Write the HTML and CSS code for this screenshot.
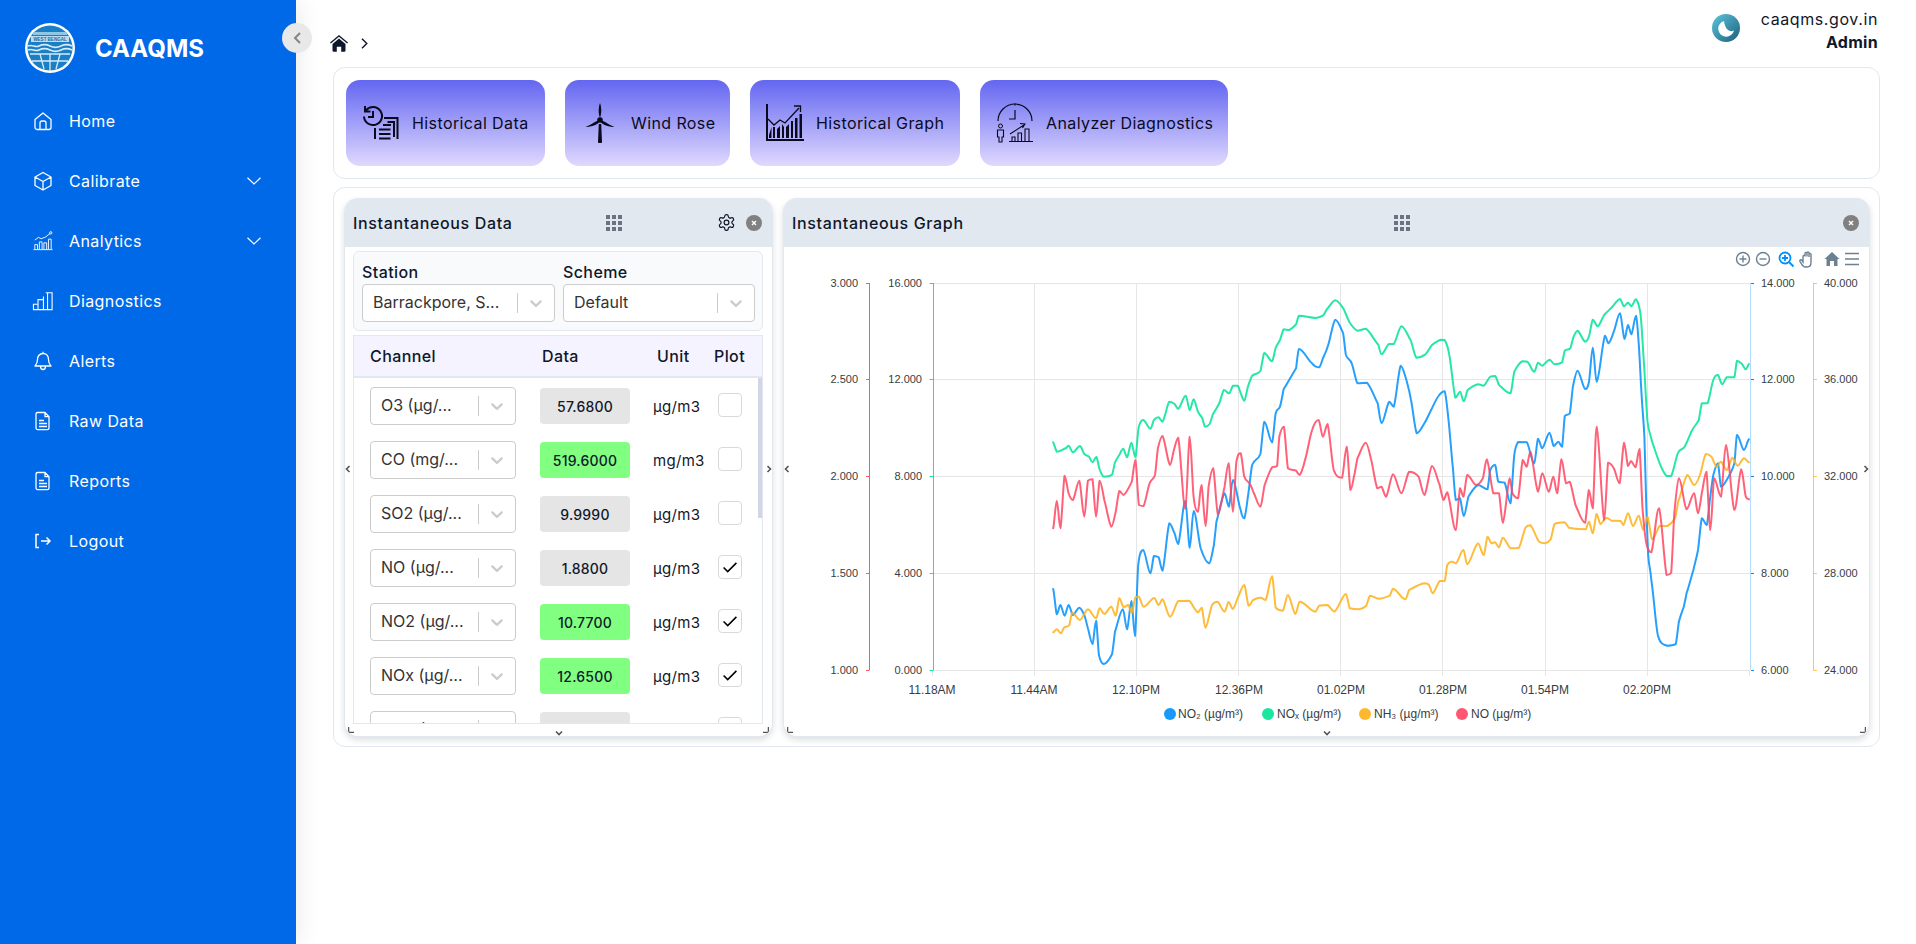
FILE: index.html
```html
<!DOCTYPE html>
<html lang="en">
<head>
<meta charset="utf-8">
<title>CAAQMS</title>
<link rel="stylesheet" href="styles.css">
</head>
<body>
<svg class="sprite" aria-hidden="true">
  <symbol id="rs-chev" viewBox="0 0 20 20"><path d="M4.516 7.548c0.436-0.446 1.043-0.481 1.576 0l3.908 3.747 3.908-3.747c0.533-0.481 1.141-0.446 1.574 0 0.436 0.445 0.408 1.197 0 1.615-0.406 0.418-4.695 4.502-4.695 4.502-0.217 0.223-0.502 0.335-0.787 0.335s-0.57-0.112-0.789-0.335c0 0-4.287-4.084-4.695-4.502s-0.436-1.17 0-1.615z"/></symbol>
  <symbol id="grid9" viewBox="0 0 16 16"><path d="M0 0h4v4H0zM6 0h4v4H6zM12 0h4v4h-4zM0 6h4v4H0zM6 6h4v4H6zM12 6h4v4h-4zM0 12h4v4H0zM6 12h4v4H6zM12 12h4v4h-4z"/></symbol>
  <symbol id="close" viewBox="0 0 16 16"><circle cx="8" cy="8" r="8" fill="#808080"/><path d="M6 6l4 4M10 6l-4 4" stroke="#fff" stroke-width="1.4" fill="none"/></symbol>
  <symbol id="doc" viewBox="0 0 20 20"><path d="M4.5 1.5h7.5l4 4.2V17a1.6 1.6 0 0 1-1.6 1.6H4.6A1.6 1.6 0 0 1 3 17V3a1.6 1.6 0 0 1 1.5-1.5zM12 1.500v4.200h4M6 9.500h5M6 12.500h8M6 15.500h8" fill="none" stroke="#fff" stroke-width="1.3" stroke-linejoin="round"/></symbol>
  <symbol id="nav-down" viewBox="0 0 14 8"><path d="M.5.700 7 7 13.500.700" fill="none" stroke="#fff" stroke-width="1.200"/></symbol>
  <symbol id="check" viewBox="0 0 24 24"><path d="M5 12.500l4.500 4.500L19 7.500" fill="none" stroke="#000" stroke-width="1.700"/></symbol>
  <symbol id="mini-l" viewBox="0 0 6 8"><path d="M4.500 1 1.500 4l3 3" fill="none" stroke="#555" stroke-width="1.600"/></symbol>
  <symbol id="mini-r" viewBox="0 0 6 8"><path d="M1.500 1l3 3-3 3" fill="none" stroke="#555" stroke-width="1.600"/></symbol>
  <symbol id="mini-d" viewBox="0 0 8 6"><path d="M1 1.500l3 3 3-3" fill="none" stroke="#555" stroke-width="1.600"/></symbol>
  <symbol id="corner-l" viewBox="0 0 6 6"><path d="M.500 0v5.500H6" fill="none" stroke="#555" stroke-width="1.500"/></symbol>
  <symbol id="corner-r" viewBox="0 0 6 6"><path d="M5.500 0v5.500H0" fill="none" stroke="#555" stroke-width="1.500"/></symbol>
</svg>

<div class="app">
  <aside class="sidebar">
    <div class="brand">
      <svg class="brand-logo" viewBox="0 0 50 50" aria-hidden="true">
        <circle cx="25" cy="25" r="25" fill="#fff"/>
        <circle cx="25" cy="25" r="22.500" fill="#1a7fc4"/>
        <path d="M8 9h34v3H8z" fill="#8fc7e6"/>
        <rect x="6" y="13" width="38" height="6" fill="#bcdcf0"/>
        <text x="25" y="18" class="logo-text" text-anchor="middle">WEST BENGAL</text>
        <path d="M3 23c4-2 7 2 11 0s7-2 11 0 7 2 11 0 7-2 11 0M3 27c4-2 7 2 11 0s7-2 11 0 7 2 11 0 7-2 11 0M5 31h40" fill="none" stroke="#d7ecf8" stroke-width="1.500"/>
        <path d="M25 31v17M15 31l4 15M35 31l-4 15M7 38h36" fill="none" stroke="#d7ecf8" stroke-width="1.300"/>
      </svg>
      <span class="brand-name">CAAQMS</span>
    </div>
    <button class="collapse" type="button" aria-label="Collapse">
      <svg viewBox="0 0 10 14" width="10" height="14"><path d="M8 2 3 7l5 5" fill="none" stroke="#858585" stroke-width="2"/></svg>
    </button>
    <nav class="menu">
      <a class="menu-item"><svg class="menu-icon" viewBox="0 0 20 20"><path d="M2 8.500 10 2l8 6.500V16.500A2 2 0 0 1 16 18.500H4a2 2 0 0 1-2-2zM7 18.500V12a2 2 0 0 1 2-2h2a2 2 0 0 1 2 2v6.500" fill="none" stroke="#fff" stroke-width="1.300" stroke-linejoin="round"/></svg><span>Home</span></a>
      <a class="menu-item"><svg class="menu-icon" viewBox="0 0 20 20"><path d="M10 1.500 18 6v8.500l-8 4.500-8-4.500V6zM2 6l8 4.500L18 6M10 10.500V19" fill="none" stroke="#fff" stroke-width="1.300" stroke-linejoin="round"/></svg><span>Calibrate</span><svg class="menu-caret"><use href="#nav-down"/></svg></a>
      <a class="menu-item"><svg class="menu-icon menu-icon--wide" viewBox="0 0 22 22"><path d="M.500 20.500h21M2 20v-5h3v5M7 20v-8h3v8M12 20v-7h3v7M17 20V9h3v11M2 10l4-3 3 1.500 5-2 5-4" fill="none" stroke="#fff" stroke-width="1"/><circle cx="19.500" cy="2" r="1.300" fill="none" stroke="#fff"/></svg><span>Analytics</span><svg class="menu-caret"><use href="#nav-down"/></svg></a>
      <a class="menu-item"><svg class="menu-icon menu-icon--wide" viewBox="0 0 22 22"><path d="M.500 14.500h5v6h-5zM5.500 9.500h6v11h-6zM11.500 6V20.500h2M14 2h7v18.500h-9.500M16 2v18.500" fill="none" stroke="#fff" stroke-width="1.200"/></svg><span>Diagnostics</span></a>
      <a class="menu-item"><svg class="menu-icon" viewBox="0 0 20 20"><path d="M10 2.500c-3.500 0-5.500 2.700-5.500 6 0 3.500-1 5-2.500 6.500h16c-1.500-1.500-2.500-3-2.500-6.500 0-3.300-2-6-5.500-6zM10 .800v1.700M7.500 15.500c0 2 1 3 2.500 3s2.500-1 2.500-3" fill="none" stroke="#fff" stroke-width="1.300" stroke-linejoin="round"/></svg><span>Alerts</span></a>
      <a class="menu-item"><svg class="menu-icon"><use href="#doc"/></svg><span>Raw Data</span></a>
      <a class="menu-item"><svg class="menu-icon"><use href="#doc"/></svg><span>Reports</span></a>
      <a class="menu-item"><svg class="menu-icon" viewBox="0 0 20 20"><path d="M6 3.500H3v13h3M8 10h9M13.500 6.500 17 10l-3.500 3.500" fill="none" stroke="#fff" stroke-width="1.500"/></svg><span>Logout</span></a>
    </nav>
  </aside>

  <main class="main">
    <header class="topbar">
      <div class="crumbs">
        <svg class="crumb-home" viewBox="0 0 18 17"><path d="M9 0 0 7.500l.900 1L9 1.800l8.100 6.700.900-1z" fill="#0f172a"/><path d="M2.500 9 9 3.500 15.500 9v6.500a1.300 1.300 0 0 1-1.300 1.300h-3v-5H6.800v5h-3a1.300 1.300 0 0 1-1.300-1.300z" fill="#0f172a"/></svg>
        <svg class="crumb-sep" viewBox="0 0 7 11"><path d="M1 .700 5.800 5.500 1 10.300" fill="none" stroke="#0f172a" stroke-width="1.400"/></svg>
      </div>
      <div class="user">
        <svg class="user-icon" viewBox="0 0 28 28"><defs><linearGradient id="ug" x1="0" y1="0" x2="1" y2="1"><stop offset="0" stop-color="#5cc6dc"/><stop offset="1" stop-color="#1d5f7d"/></linearGradient></defs><circle cx="14" cy="14" r="14" fill="url(#ug)"/><path d="M12 7a8 8 0 1 0 10 9.500c-4 2-9-.500-10-9.500z" fill="#fff"/></svg>
        <div class="user-text"><span class="user-site">caaqms.gov.in</span><strong class="user-role">Admin</strong></div>
      </div>
    </header>

    <section class="card card--actions">
      <a class="action action--hist">
        <svg class="action-icon" viewBox="0 0 40 40"><path d="M5 7.400A9 9 0 1 1 3 13.500M4 3v5.500h5.500M12 8v6H7" fill="none" stroke="#0a0a1e" stroke-width="2"/><path d="M23 15h13.500v21M26.500 19h6.500v15M14 25v11M18 26.500h11.500M18 31h11.500M18 35.500h11.500M22 22h8" fill="none" stroke="#0a0a1e" stroke-width="2"/></svg>
        <span>Historical Data</span>
      </a>
      <a class="action action--wind">
        <svg class="action-icon" viewBox="0 0 40 40"><path d="M20 15C18 10 18.500 4 20 0c1.500 4 2 10 0 15zM18 17.500C13 20 9 22.500 5.500 24c4 0 9.500-1 13.500-4.500zM22 17.500c5 2.500 9 5 12.500 6.500-4 0-9.500-1-13.500-4.500z" fill="#0a0a1e"/><circle cx="20" cy="17" r="2.800" fill="#0a0a1e"/><path d="M18.800 21h2.400l.800 17.500a2 2 0 0 1-4 0z" fill="#0a0a1e"/></svg>
        <span>Wind Rose</span>
      </a>
      <a class="action action--graph">
        <svg class="action-icon" viewBox="0 0 40 40"><path d="M2 1v36h37" fill="none" stroke="#0a0a1e" stroke-width="2"/><path d="M4 32l2.500-8v11H4zM8 24h2v11H8zM12 26l3-3v12h-3zM17 21l2 3v11h-2zM21 24l3-3v14h-3zM26 18h2v17h-2zM30 15h2.500v20H30zM34.500 11H37v24h-2.500z" fill="#0a0a1e"/><path d="M3 16l6 6 6-5 5 3L34 5" fill="none" stroke="#0a0a1e" stroke-width="1.300"/><path d="M29 3h6.500v6" fill="none" stroke="#0a0a1e" stroke-width="1.300"/></svg>
        <span>Historical Graph</span>
      </a>
      <a class="action action--diag">
        <svg class="action-icon" viewBox="0 0 40 40"><path d="M3 18a17 17 0 0 1 34 0" fill="none" stroke="#0a0a1e" stroke-width="1.200"/><path d="M20 7v9h-6M20 .500v2" fill="none" stroke="#0a0a1e" stroke-width="1.200"/><circle cx="5.500" cy="23" r="2" fill="none" stroke="#0a0a1e"/><path d="M2.500 27h6v7H7v5H4v-5H2.500z" fill="none" stroke="#0a0a1e" stroke-width="1.100"/><path d="M15 31l14-9M25 20.500l5 .500-2.500 4M14 38.500h24M17 38v-4h3v4M23 38v-8h3.500v8M30 38V26h4v12" fill="none" stroke="#0a0a1e" stroke-width="1.100"/></svg>
        <span>Analyzer Diagnostics</span>
      </a>
    </section>

    <section class="card card--panels">
      <article class="panel panel--data">
        <div class="panel-head panel-head--data">
          <h2 class="panel-title">Instantaneous Data</h2>
          <svg class="grip"><use href="#grid9"/></svg>
          <div class="panel-tools">
            <svg class="gear" viewBox="0 0 24 24"><path d="M12.220 2h-.44a2 2 0 0 0-2 2v.180a2 2 0 0 1-1 1.730l-.430.250a2 2 0 0 1-2 0l-.150-.080a2 2 0 0 0-2.730.730l-.220.380a2 2 0 0 0 .730 2.730l.150.100a2 2 0 0 1 1 1.720v.510a2 2 0 0 1-1 1.740l-.150.090a2 2 0 0 0-.730 2.730l.220.380a2 2 0 0 0 2.730.730l.150-.080a2 2 0 0 1 2 0l.430.250a2 2 0 0 1 1 1.730V20a2 2 0 0 0 2 2h.440a2 2 0 0 0 2-2v-.180a2 2 0 0 1 1-1.730l.430-.250a2 2 0 0 1 2 0l.150.080a2 2 0 0 0 2.730-.730l.220-.390a2 2 0 0 0-.730-2.730l-.150-.080a2 2 0 0 1-1-1.740v-.500a2 2 0 0 1 1-1.740l.150-.090a2 2 0 0 0 .730-2.730l-.220-.380a2 2 0 0 0-2.730-.730l-.150.080a2 2 0 0 1-2 0l-.430-.250a2 2 0 0 1-1-1.730V4a2 2 0 0 0-2-2z" fill="none" stroke="#0f172a" stroke-width="1.500"/><circle cx="12" cy="12" r="3" fill="none" stroke="#0f172a" stroke-width="1.500"/></svg>
            <svg class="close"><use href="#close"/></svg>
          </div>
        </div>
        <div class="panel-body">
          <div class="filters">
            <div class="filter">
              <label class="filter-label">Station</label>
              <div class="select"><span class="select-value">Barrackpore, S...</span><i class="select-sep"></i><svg class="select-chev"><use href="#rs-chev"/></svg></div>
            </div>
            <div class="filter">
              <label class="filter-label">Scheme</label>
              <div class="select"><span class="select-value">Default</span><i class="select-sep"></i><svg class="select-chev"><use href="#rs-chev"/></svg></div>
            </div>
          </div>
          <div class="table">
            <div class="table-head"><span>Channel</span><span>Data</span><span>Unit</span><span>Plot</span></div>
            <div class="table-body">
              <div class="row"><div class="select select--row"><span class="select-value">O3 (µg/...</span><i class="select-sep"></i><svg class="select-chev"><use href="#rs-chev"/></svg></div><div class="value">57.6800</div><div class="unit">µg/m3</div><div class="tick"></div></div>
              <div class="row"><div class="select select--row"><span class="select-value">CO (mg/...</span><i class="select-sep"></i><svg class="select-chev"><use href="#rs-chev"/></svg></div><div class="value value--ok">519.6000</div><div class="unit">mg/m3</div><div class="tick"></div></div>
              <div class="row"><div class="select select--row"><span class="select-value">SO2 (µg/...</span><i class="select-sep"></i><svg class="select-chev"><use href="#rs-chev"/></svg></div><div class="value">9.9990</div><div class="unit">µg/m3</div><div class="tick"></div></div>
              <div class="row"><div class="select select--row"><span class="select-value">NO (µg/...</span><i class="select-sep"></i><svg class="select-chev"><use href="#rs-chev"/></svg></div><div class="value">1.8800</div><div class="unit">µg/m3</div><div class="tick"><svg><use href="#check"/></svg></div></div>
              <div class="row"><div class="select select--row"><span class="select-value">NO2 (µg/...</span><i class="select-sep"></i><svg class="select-chev"><use href="#rs-chev"/></svg></div><div class="value value--ok">10.7700</div><div class="unit">µg/m3</div><div class="tick"><svg><use href="#check"/></svg></div></div>
              <div class="row"><div class="select select--row"><span class="select-value">NOx (µg/...</span><i class="select-sep"></i><svg class="select-chev"><use href="#rs-chev"/></svg></div><div class="value value--ok">12.6500</div><div class="unit">µg/m3</div><div class="tick"><svg><use href="#check"/></svg></div></div>
              <div class="row"><div class="select select--row"><span class="select-value">NH3 (µg/...</span><i class="select-sep"></i><svg class="select-chev"><use href="#rs-chev"/></svg></div><div class="value">30.7000</div><div class="unit">µg/m3</div><div class="tick"><svg><use href="#check"/></svg></div></div>
              <span class="scrollbar"></span>
            </div>
          </div>
        </div>
        <svg class="mark mark--l"><use href="#mini-l"/></svg>
        <svg class="mark mark--r"><use href="#mini-r"/></svg>
        <svg class="mark-d"><use href="#mini-d"/></svg>
        <svg class="corner corner--l"><use href="#corner-l"/></svg>
        <svg class="corner corner--r"><use href="#corner-r"/></svg>
      </article>

      <article class="panel panel--graph">
        <div class="panel-head panel-head--graph">
          <h2 class="panel-title">Instantaneous Graph</h2>
          <svg class="grip"><use href="#grid9"/></svg>
          <div class="panel-tools"><svg class="close"><use href="#close"/></svg></div>
        </div>
        <svg class="chart" viewBox="783 247 1087 490" width="1087" height="490">
          <g class="grid">
            <path d="M933 283.500H1750M933 379.500H1750M933 476.500H1750M933 573.500H1750M933 670.500H1750"/>
            <path d="M1034.500 283V676M1136.500 283V676M1238.500 283V676M1340.500 283V676M1442.500 283V676M1545.500 283V676M1647.500 283V676M932.500 670V676M1749.500 670V676"/>
          </g>
          <path class="ax ax-red" d="M869.500 283V670M866 283.500h3.500M866 379.500h3.500M866 476.500h3.500M866 573.500h3.500M866 670.500h3.500"/>
          <path class="ax ax-green" d="M933.500 283V670M929.500 283.500h4M929.500 379.500h4M929.500 476.500h4M929.500 573.500h4M929.500 670.500h4"/>
          <path class="ax ax-blue" d="M1750.500 283V670"/>
          <path class="ax-blue-ticks" d="M1751 283.500h3M1751 379.500h3M1751 476.500h3M1751 573.500h3M1751 670.500h3"/>
          <path class="ax ax-orange" d="M1813.500 283V670M1813 283.500h4M1813 379.500h4M1813 476.500h4M1813 573.500h4M1813 670.500h4"/>

          <g class="lbl lbl-end">
            <text x="858" y="287">3.000</text><text x="858" y="383">2.500</text><text x="858" y="480">2.000</text><text x="858" y="577">1.500</text><text x="858" y="674">1.000</text>
            <text x="922" y="287">16.000</text><text x="922" y="383">12.000</text><text x="922" y="480">8.000</text><text x="922" y="577">4.000</text><text x="922" y="674">0.000</text>
          </g>
          <g class="lbl">
            <text x="1761" y="287">14.000</text><text x="1761" y="383">12.000</text><text x="1761" y="480">10.000</text><text x="1761" y="577">8.000</text><text x="1761" y="674">6.000</text>
            <text x="1824" y="287">40.000</text><text x="1824" y="383">36.000</text><text x="1824" y="480">32.000</text><text x="1824" y="577">28.000</text><text x="1824" y="674">24.000</text>
          </g>
          <g class="lbl lbl-x">
            <text x="932" y="694">11.18AM</text><text x="1034" y="694">11.44AM</text><text x="1136" y="694">12.10PM</text><text x="1239" y="694">12.36PM</text><text x="1341" y="694">01.02PM</text><text x="1443" y="694">01.28PM</text><text x="1545" y="694">01.54PM</text><text x="1647" y="694">02.20PM</text>
          </g>

          <polyline class="s s-blue" points="1053.2,589 1056.8,614.3 1060.4,605 1064.6,615.7 1068.6,605 1072.9,615 1079.3,607.7 1084.3,615 1087.9,628.3 1092.5,644 1096.1,620.7 1098.9,655 1103.9,664 1112.1,654 1115,631.7 1122.9,609.3 1127.1,629.3 1131.4,601 1135,636 1138.2,565 1143.2,550 1150.4,573.3 1153.9,556 1158.6,557.3 1162.5,570.7 1169.3,523.3 1174.6,533.3 1178.2,544 1185.4,501 1189.7,547.7 1193.6,511 1200.7,548.3 1209.3,563.3 1213.9,545 1216.4,521.7 1224.6,493.3 1228.9,506.7 1232.9,480 1240.7,510 1244.3,518.3 1247.9,496.7 1252.1,465 1260.4,454 1264.3,421.7 1272.1,442.3 1275.7,413.3 1280,406.7 1283.6,389.3 1296.1,368.3 1298.9,349 1312.1,363.3 1319.3,367.3 1322.9,358.3 1328.2,345 1335.2,319.7 1343.2,333.3 1345.9,355 1351.7,363.3 1357.4,383.3 1367,382.7 1377.7,403.3 1381.5,423.3 1389.2,401.7 1393.8,406.7 1400.7,365.7 1406.4,380 1411,400 1416.7,433.3 1424.4,423.3 1432,408.3 1438.5,396 1444.7,391.3 1448.5,420 1453.1,470 1455.8,500 1460,498.3 1463.8,516 1468.4,496.7 1478,485 1487.5,489.3 1490.2,470 1495.2,465 1498.2,481.7 1504.7,482.7 1510.5,503.3 1514.3,455 1518.1,442 1526.9,442.3 1534.2,463.3 1538,438.7 1542.2,448.3 1549.5,432.7 1553.7,446 1558.3,441.7 1562.1,446.7 1564.8,416 1569.8,413.3 1572.9,386.7 1577.5,370.7 1585.1,389 1588.9,382.3 1592.8,347.7 1596.6,381.7 1605,335.7 1608.5,343.3 1613.8,331.7 1620,313.3 1624.5,339 1628,325 1631.4,334.3 1636,315.7 1638.7,343.3 1641.7,396.7 1644.4,436.7 1646.3,506.7 1648.3,556.7 1651.3,580 1657.8,635 1666.6,645.7 1675.8,644 1678.9,621.7 1683.8,606.7 1686.5,593.3 1693.4,570 1698,550 1701.8,518.3 1706.8,525 1710.3,496.7 1713.3,475 1717.9,463.3 1721,486.7 1728.6,476.7 1734.4,463.3 1737,435 1743.9,450 1748.9,439.3"/>
          <polyline class="s s-green" points="1053.2,442.3 1056.8,451.7 1065.7,448.3 1068.6,445.7 1072.9,452.3 1080,446 1084.3,454 1089,456.7 1092.5,462.3 1096.4,457 1099.6,469.3 1103.6,476.7 1112.1,474.7 1115,462.3 1119.3,455 1123.2,448.7 1127.1,457.3 1131.4,442.7 1135.4,457.3 1138.6,427.7 1143.2,420 1150.4,428.7 1153.9,420 1158.6,417.3 1162.5,421.7 1169.3,401.7 1174.6,404 1178.2,409 1185.7,395.7 1189.7,410 1193.6,399.3 1197.9,411.7 1202.1,417.7 1205,426.7 1209.6,424 1212.9,414.3 1219.3,403.3 1223.9,390 1229.3,393.3 1232.9,385.7 1237.9,385.7 1240.7,393.3 1244.3,400.7 1247.9,386.7 1252.1,375.7 1260.4,371 1264.3,353 1272.1,361.3 1275.7,347.7 1280,340 1283.6,329.3 1288.9,330 1296.1,324.3 1298.9,315.7 1315.7,318 1322.9,315.7 1326.8,309.3 1335.2,300.3 1343.2,308.3 1349.8,322.7 1357.4,330.7 1365.8,328.7 1378.5,345 1381.5,354.3 1388.8,344 1393.8,344 1401.4,326.3 1411,341 1416.3,357.7 1425.5,354.3 1432,345 1440.8,339.7 1444.7,340 1449.3,355 1455.4,397.7 1460,391.7 1463.8,401.3 1467.6,390 1478,384.3 1483.7,385.7 1490.2,376.7 1495.2,376 1499,385 1510.5,393.3 1514.3,371.7 1522,361.3 1527.7,362 1534.2,371.7 1538,362.7 1542.2,365.7 1549.5,359.7 1554.5,364.3 1562.1,362.3 1564.8,350.7 1570.2,348.3 1573.6,336.7 1577.5,330.7 1585.1,341.7 1588.9,336.7 1592.8,319.7 1597.7,326.3 1604.2,315 1611.9,307.3 1620,299 1623.8,306.3 1628,302.7 1631.4,306.3 1636,299.3 1640.6,315 1644.4,370 1647.5,421.7 1652.1,441.7 1659.7,463.3 1666.6,476 1671.2,476 1678.1,452.7 1684.6,446.7 1692.3,430 1698.8,420 1701.8,403.3 1707.6,403.3 1713.3,380 1717.9,375 1722.1,384.3 1726.7,377.3 1734.4,377.3 1737,360.7 1742,364 1745.8,369.3 1748.9,364"/>
          <polyline class="s s-orange" points="1053.2,632.3 1056.8,629.3 1061.1,633.3 1063.9,627.7 1069.3,625 1072.1,612.7 1080,620 1087.9,609.3 1096.1,618.3 1099.6,608.3 1104.3,614 1111.4,606.7 1115.7,615.7 1119.3,598.3 1123.6,607.3 1128.2,605 1131.8,612.7 1135.4,597.3 1138.9,596.7 1143.6,606.7 1154.3,598 1158.6,605 1162.5,599.3 1170,616.7 1178.2,601 1189,600.7 1197.9,612.3 1201.8,607.7 1205.4,627.7 1212.1,605 1217.5,601.7 1224.6,611.7 1228.6,602 1232.9,609 1238.2,596.7 1244.3,585 1248.6,605.7 1253.2,600 1260.4,597.7 1265.7,600 1272.1,576.3 1275.7,607.7 1282.9,610.7 1287.9,595 1295.4,614 1299.6,601.7 1315.3,611.7 1319.1,605.7 1327.6,605 1334.4,611.7 1345.9,594 1349.8,608.3 1359.3,609.3 1366.2,605.7 1370,595.7 1378.5,598.7 1389.9,595.7 1393,588.7 1405.2,599.3 1409.1,590 1424.4,583.3 1429,585 1432.8,593.3 1439.7,581 1444.7,581 1447.3,565 1451.9,561.7 1456.1,563.3 1463.4,550 1467.2,564.3 1478,543.3 1483.7,555 1487.5,536.7 1491.4,543.3 1495.2,542.3 1499,547.3 1502.8,537.7 1510.5,548.3 1518.9,547.7 1525.8,527.3 1530.4,525.3 1539.2,541.7 1544.9,543.3 1550.7,539.3 1554.5,524 1564.8,522.3 1569,527.7 1585.9,529.3 1588.9,521.7 1592.8,533.3 1596.6,514 1600.4,524 1606.2,517.7 1611.9,520.7 1620.7,521 1623.4,525 1628,513.3 1633,526 1638.7,515.7 1643.3,530 1647.5,516.7 1652.1,539.3 1659.7,526 1667.4,526 1675,518.3 1678.1,501.7 1687.3,475 1694.2,485 1699.9,475 1705.7,454 1711.4,456.7 1716.4,466.7 1721,461.7 1726.7,470 1732.5,457.7 1737.4,465.7 1743.9,458.3 1748.9,462.3"/>
          <polyline class="s s-red" points="1053.2,528.3 1056.8,500.7 1060.4,528.3 1064.6,475.7 1068.6,493.3 1072.9,500 1079.3,480.7 1084.3,516.7 1087.9,480.7 1092.5,479.3 1096.1,516.7 1099.6,480.7 1104.3,500 1111.4,526.7 1115.7,511.7 1119.3,491 1123.6,495 1131.8,481.7 1135.4,460 1138.9,505 1143.6,506 1149.6,483.3 1155,475 1157.9,448.3 1162.5,436 1170,465 1173.9,450 1178.2,437.7 1185.4,509 1189.7,436.7 1193.6,496.7 1197.9,511.7 1201.4,485 1205.7,526 1208.6,486.7 1213.2,468.3 1217.9,514.3 1224.6,486.7 1228.6,463.3 1232.9,511.7 1236.4,461.7 1240.7,453.3 1244.3,476.7 1249.6,483.3 1253.2,491.7 1260.4,506.7 1264.6,485 1272.1,467.3 1277.1,466 1279.3,436.7 1283.9,426.7 1287.9,468.3 1296.1,470.7 1299.6,475 1305,460 1312.1,430 1318.6,420 1322.9,436.7 1327.5,424 1333.7,470 1342.1,477.7 1346.7,446.7 1350.5,490 1354.7,473.3 1357.4,458.3 1365.8,442.7 1370.8,458.3 1377.3,488.3 1381.5,486.7 1386.1,496.7 1393,474.3 1401.4,493.3 1409.1,471.7 1418.6,476.7 1424.4,495 1432,466 1439.7,485 1443.5,500 1447.3,492.3 1455.8,530 1460,488.3 1463.4,496.7 1467.2,475 1476,485 1482.9,478.3 1486.8,459.3 1493.3,493.3 1499,493.3 1502.8,522.7 1509.7,478.3 1512.4,493.3 1518.1,498.3 1522.7,460 1526.6,466.7 1530.4,451.7 1538,491.7 1542.2,473.3 1548.8,491.7 1553.3,476.7 1557.2,493.3 1561.4,459.3 1566,483.3 1569.8,481.7 1575.5,505 1585.1,522.7 1588.9,490 1592.8,508.3 1596.6,426.7 1604.2,520 1608.1,462.7 1613.8,468.3 1619.6,483.3 1624.1,442.7 1628,466 1631,461 1635.6,467.3 1639.5,449 1642.5,508.3 1646.3,543.3 1651.3,552.3 1659,508.3 1666.6,575 1671.2,572.7 1674.3,513.3 1678.9,478.3 1686.5,509.3 1694.2,493.3 1698,513.3 1701.8,493.3 1706.4,471.7 1710.3,530 1714.1,478.3 1721,496.7 1725.9,445 1734.4,510 1741.3,469.3 1745.8,496.7 1748.9,499.3"/>

          <g class="legend">
            <circle cx="1170" cy="714" r="6" fill="#008ffb"/><text x="1178" y="718">NO₂ (µg/m³)</text>
            <circle cx="1268" cy="714" r="6" fill="#00e396"/><text x="1277" y="718">NOₓ (µg/m³)</text>
            <circle cx="1365" cy="714" r="6" fill="#feb019"/><text x="1374" y="718">NH₃ (µg/m³)</text>
            <circle cx="1462" cy="714" r="6" fill="#ff4560"/><text x="1471" y="718">NO (µg/m³)</text>
          </g>

          <g class="toolbar">
            <circle cx="1743" cy="259" r="6.500"/><path d="M1743 255.500v7M1739.500 259h7"/>
            <circle cx="1763" cy="259" r="6.500"/><path d="M1759.500 259h7"/>
            <g class="tool-on"><circle cx="1785" cy="258" r="5.500"/><path d="M1789 262l4.500 4.500" stroke-width="2.500"/><path d="M1785 255v6M1782 258h6" stroke-width="1.200"/></g>
            <path d="M1803 259v-2.500c0-1.500 2-1.500 2 0v-3c0-1.500 2-1.500 2 0v3-3.500c0-1.500 2-1.500 2 0v4-2.500c0-1.500 2-1.500 2 0v8c0 3-1.500 4.500-4 4.500h-2c-2 0-3-2-5-5.500-.800-1.500 1-2.500 2-1l1 1.500z" stroke-width="1.100"/>
            <path class="tool-fill" d="M1832 252l7.500 7h-2v7h-3.500v-5h-4v5h-3.500v-7h-2z"/>
            <path d="M1845 253.500h14M1845 259h14M1845 264.500h14" stroke-width="2"/>
          </g>
        </svg>
        <svg class="mark mark--l"><use href="#mini-l"/></svg>
        <svg class="mark mark--r"><use href="#mini-r"/></svg>
        <svg class="mark-d"><use href="#mini-d"/></svg>
        <svg class="corner corner--l"><use href="#corner-l"/></svg>
        <svg class="corner corner--r"><use href="#corner-r"/></svg>
      </article>
    </section>
  </main>
</div>
<script src="chart.js"></script>
</body>
</html>
```
FILE: styles.css
```css
* { box-sizing: border-box; }
html, body { margin: 0; height: 100%; }
body {
  font-family: Inter, "Noto Sans", "Liberation Sans", sans-serif;
  color: #0f172a;
  background: #fff;
  overflow: hidden;
}
.sprite { width: 0; height: 0; position: absolute; }
.app { display: flex; height: 944px; }

/* sidebar */
.sidebar {
  position: relative;
  flex: 0 0 296px;
  background: #0069e8;
  color: #fff;
  box-shadow: 0 0 24px rgba(0, 0, 0, .1);
  z-index: 2;
}
.brand { display: flex; align-items: center; gap: 20px; height: 91px; padding: 5px 0 0 25px; }
.brand-logo { width: 50px; height: 50px; flex: none; }
.logo-text { font: 700 4.500px "Liberation Sans", sans-serif; fill: #1a6ba5; }
.brand-name { font-size: 24px; font-weight: 700; }
.collapse {
  position: absolute; left: 282px; top: 23px;
  width: 30px; height: 30px; padding: 0;
  display: flex; align-items: center; justify-content: center;
  border: 0; border-radius: 50%; background: #e8e8e8;
}
.menu { display: flex; flex-direction: column; }
.menu-item { display: flex; align-items: center; height: 60px; padding: 0 35px 0 33px; font-size: 16px; letter-spacing: .4px; }
.menu-icon { width: 20px; height: 20px; margin-right: 16px; flex: none; }
.menu-icon--wide { overflow: visible; }
.menu-caret { width: 14px; height: 8px; margin-left: auto; }

/* main */
.main { flex: 1; min-width: 0; padding: 0 36px 0 37px; display: flex; flex-direction: column; }
.topbar { display: flex; justify-content: space-between; height: 67px; }
.crumbs { display: flex; align-items: center; gap: 13px; margin: 35px 0 0 -3px; height: 17px; }
.crumb-home { width: 18px; height: 17px; }
.crumb-sep { width: 7px; height: 11px; }
.user { display: flex; gap: 21px; padding-top: 8px; height: 60px; margin-right: 2px; }
.user-icon { width: 28px; height: 28px; margin-top: 6px; }
.user-text { display: flex; flex-direction: column; align-items: flex-end; line-height: 23px; font-size: 16px; letter-spacing: .6px; }
.user-role { font-size: 16px; font-weight: 700; letter-spacing: .3px; }

.card { border: 1px solid #e2e8f0; border-radius: 12px; background: #fff; }
.card--actions { display: flex; gap: 20px; height: 112px; padding: 12px; }
.action {
  display: flex; align-items: center; gap: 11px; height: 86px; padding-left: 15px;
  border-radius: 14px;
  background: linear-gradient(180deg, #6366f1 0%, #e0d9fe 100%);
  font-size: 16px; font-weight: 400; letter-spacing: .4px; color: #0a0a1e; white-space: nowrap;
}
.action-icon { width: 40px; height: 40px; flex: none; }
.action--hist { width: 199px; }
.action--wind { width: 165px; }
.action--graph { width: 210px; }
.action--diag { width: 248px; }

.card--panels { display: flex; gap: 10px; height: 560px; margin-top: 8px; padding: 10px 9px 8px 10px; }
.panel {
  position: relative; display: flex; flex-direction: column; height: 539px;
  background: #fff; border-radius: 14px; overflow: hidden;
  border: 1px solid #e2e8f0; border-top: 0;
  box-shadow: 0 3px 6px rgba(15, 23, 42, .14);
}
.panel--data { flex: 0 0 429px; }
.panel--graph { flex: 1; min-width: 0; }
.panel-head { display: grid; align-items: center; height: 49px; padding-left: 8px; background: #e2e8f0; flex: none; }
.panel-head--data { grid-template-columns: 253px 16px 1fr; }
.panel-head--graph { grid-template-columns: 602px 16px 1fr; }
.panel-title { margin: 0; font-size: 16px; font-weight: 500; line-height: 24px; letter-spacing: .65px; }
.grip { width: 16px; height: 16px; fill: #6b7280; }
.panel-tools { display: flex; justify-content: flex-end; align-items: center; gap: 10px; padding-right: 10px; }
.gear { width: 19px; height: 19px; }
.close { width: 16px; height: 16px; }

.panel-body { display: flex; flex-direction: column; gap: 4px; padding: 4px 9px 0 8px; height: 477px; }
.filters {
  display: grid; grid-template-columns: 193px 192px; gap: 8px; flex: none;
  height: 80px; padding: 0 8px; border: 1px solid #e2e8f0; border-radius: 6px; background: #f8fafc;
}
.filter-label { display: block; padding-top: 8px; font-size: 16px; line-height: 24px; font-weight: 500; letter-spacing: .4px; }
.select {
  display: flex; align-items: center; height: 38px; padding-left: 10px;
  border: 1px solid #ccc; border-radius: 4px; background: #fff; color: #333;
  font-size: 16px;
}
.select-value { flex: 1; white-space: nowrap; overflow: hidden; padding-bottom: 2px; }
.select-sep { width: 1px; height: 20px; background: #ccc; flex: none; }
.select-chev { width: 20px; height: 20px; margin: 0 8px; fill: #ccc; flex: none; }
.select--row { width: 146px; }

.table { flex: none; height: 389px; border: 1px solid #e2e8f0; overflow: hidden; }
.table-head {
  display: grid; grid-template-columns: 172px 115px 57px auto; align-items: center;
  height: 42px; padding-left: 16px; background: #f5f3ff; border-bottom: 2px solid #e2e8f0;
  font-size: 16px; font-weight: 500; letter-spacing: .4px;
}
.table-body { position: relative; display: flex; flex-direction: column; gap: 16px; padding: 9px 0 0 16px; }
.row { display: grid; grid-template-columns: 146px 90px 40px 24px; column-gap: 24px; align-items: center; height: 38px; flex: none; }
.value {
  display: flex; align-items: center; justify-content: center; height: 36px;
  background: #e5e5e5; border-radius: 4px; font-size: 14px; font-weight: 500; letter-spacing: .2px;
}
.value--ok { background: #80ff80; }
.unit { font-size: 15px; white-space: nowrap; letter-spacing: .3px; margin-left: -1px; }
.tick { width: 24px; height: 24px; margin-top: -2px; border: 1px solid #d9d9d9; border-radius: 4px; background: #fff; display: flex; align-items: center; justify-content: center; }
.tick svg { width: 22px; height: 22px; }
.scrollbar { position: absolute; right: 0; top: 0; width: 4px; height: 140px; background: #d2d6e6; }

/* resize markers over the panels */
.mark { position: absolute; top: 267px; width: 6px; height: 8px; }
.mark--l { left: 0; }
.mark--r { right: 0; }
.mark-d { position: absolute; bottom: 0; left: 50%; width: 8px; height: 6px; margin-left: -4px; }
.corner { position: absolute; bottom: 3px; width: 6px; height: 6px; }
.corner--l { left: 3px; }
.corner--r { right: 3px; }

/* chart */
.chart { display: block; margin-left: -1px; font-family: "Liberation Sans", Arial, sans-serif; flex: none; }
.grid path { stroke: #e6e6e6; stroke-width: 1; fill: none; }
.ax { fill: none; stroke-width: 1; opacity: .9; }
.ax-red { stroke: #ff4560; }
.ax-green { stroke: #00e396; }
.ax-blue { stroke: #008ffb; opacity: .3; }
.ax-blue-ticks { fill: none; stroke: #008ffb; stroke-width: 1; }
.ax-orange { stroke: #feb019; opacity: .7; }
.lbl text { font-size: 11px; fill: #373d3f; }
.lbl-end text { text-anchor: end; }
.lbl-x text { font-size: 12px; text-anchor: middle; }
.s { fill: none; stroke-width: 2; stroke-linejoin: round; stroke-linecap: round; opacity: .85; }
.s-blue { stroke: #008ffb; }
.s-green { stroke: #00e396; }
.s-orange { stroke: #feb019; }
.s-red { stroke: #ff4560; }
.legend circle { fill-opacity: .9; }
.legend text { font-size: 12px; fill: #373d3f; }
.toolbar circle, .toolbar path { fill: none; stroke: #6e8192; stroke-width: 1.400; }
.toolbar .tool-fill { fill: #6e8192; stroke: none; }
.toolbar .tool-on circle, .toolbar .tool-on path { stroke: #008ffb; stroke-width: 1.800; }
```
FILE: chart.js
```js
// Turns each series polyline into a smooth curve, as the chart library draws it.
document.querySelectorAll('polyline.s').forEach(function (line) {
  var p = line.getAttribute('points').trim().split(/\s+/).map(function (pair) {
    return pair.split(',').map(Number);
  });
  var d = 'M' + p[0][0] + ' ' + p[0][1];
  for (var i = 0; i < p.length - 1; i++) {
    var a = p[Math.max(i - 1, 0)], b = p[i], c = p[i + 1], e = p[Math.min(i + 2, p.length - 1)];
    var minY = Math.min(b[1], c[1]), maxY = Math.max(b[1], c[1]);
    var y1 = Math.min(maxY, Math.max(minY, b[1] + (c[1] - a[1]) / 6));
    var y2 = Math.min(maxY, Math.max(minY, c[1] - (e[1] - b[1]) / 6));
    var x1 = b[0] + (c[0] - b[0]) / 3, x2 = c[0] - (c[0] - b[0]) / 3;
    d += 'C' + x1.toFixed(1) + ' ' + y1.toFixed(1) + ' ' + x2.toFixed(1) + ' ' + y2.toFixed(1) + ' ' + c[0] + ' ' + c[1];
  }
  var path = document.createElementNS('http://www.w3.org/2000/svg', 'path');
  path.setAttribute('class', line.getAttribute('class'));
  path.setAttribute('d', d);
  line.replaceWith(path);
});
```
